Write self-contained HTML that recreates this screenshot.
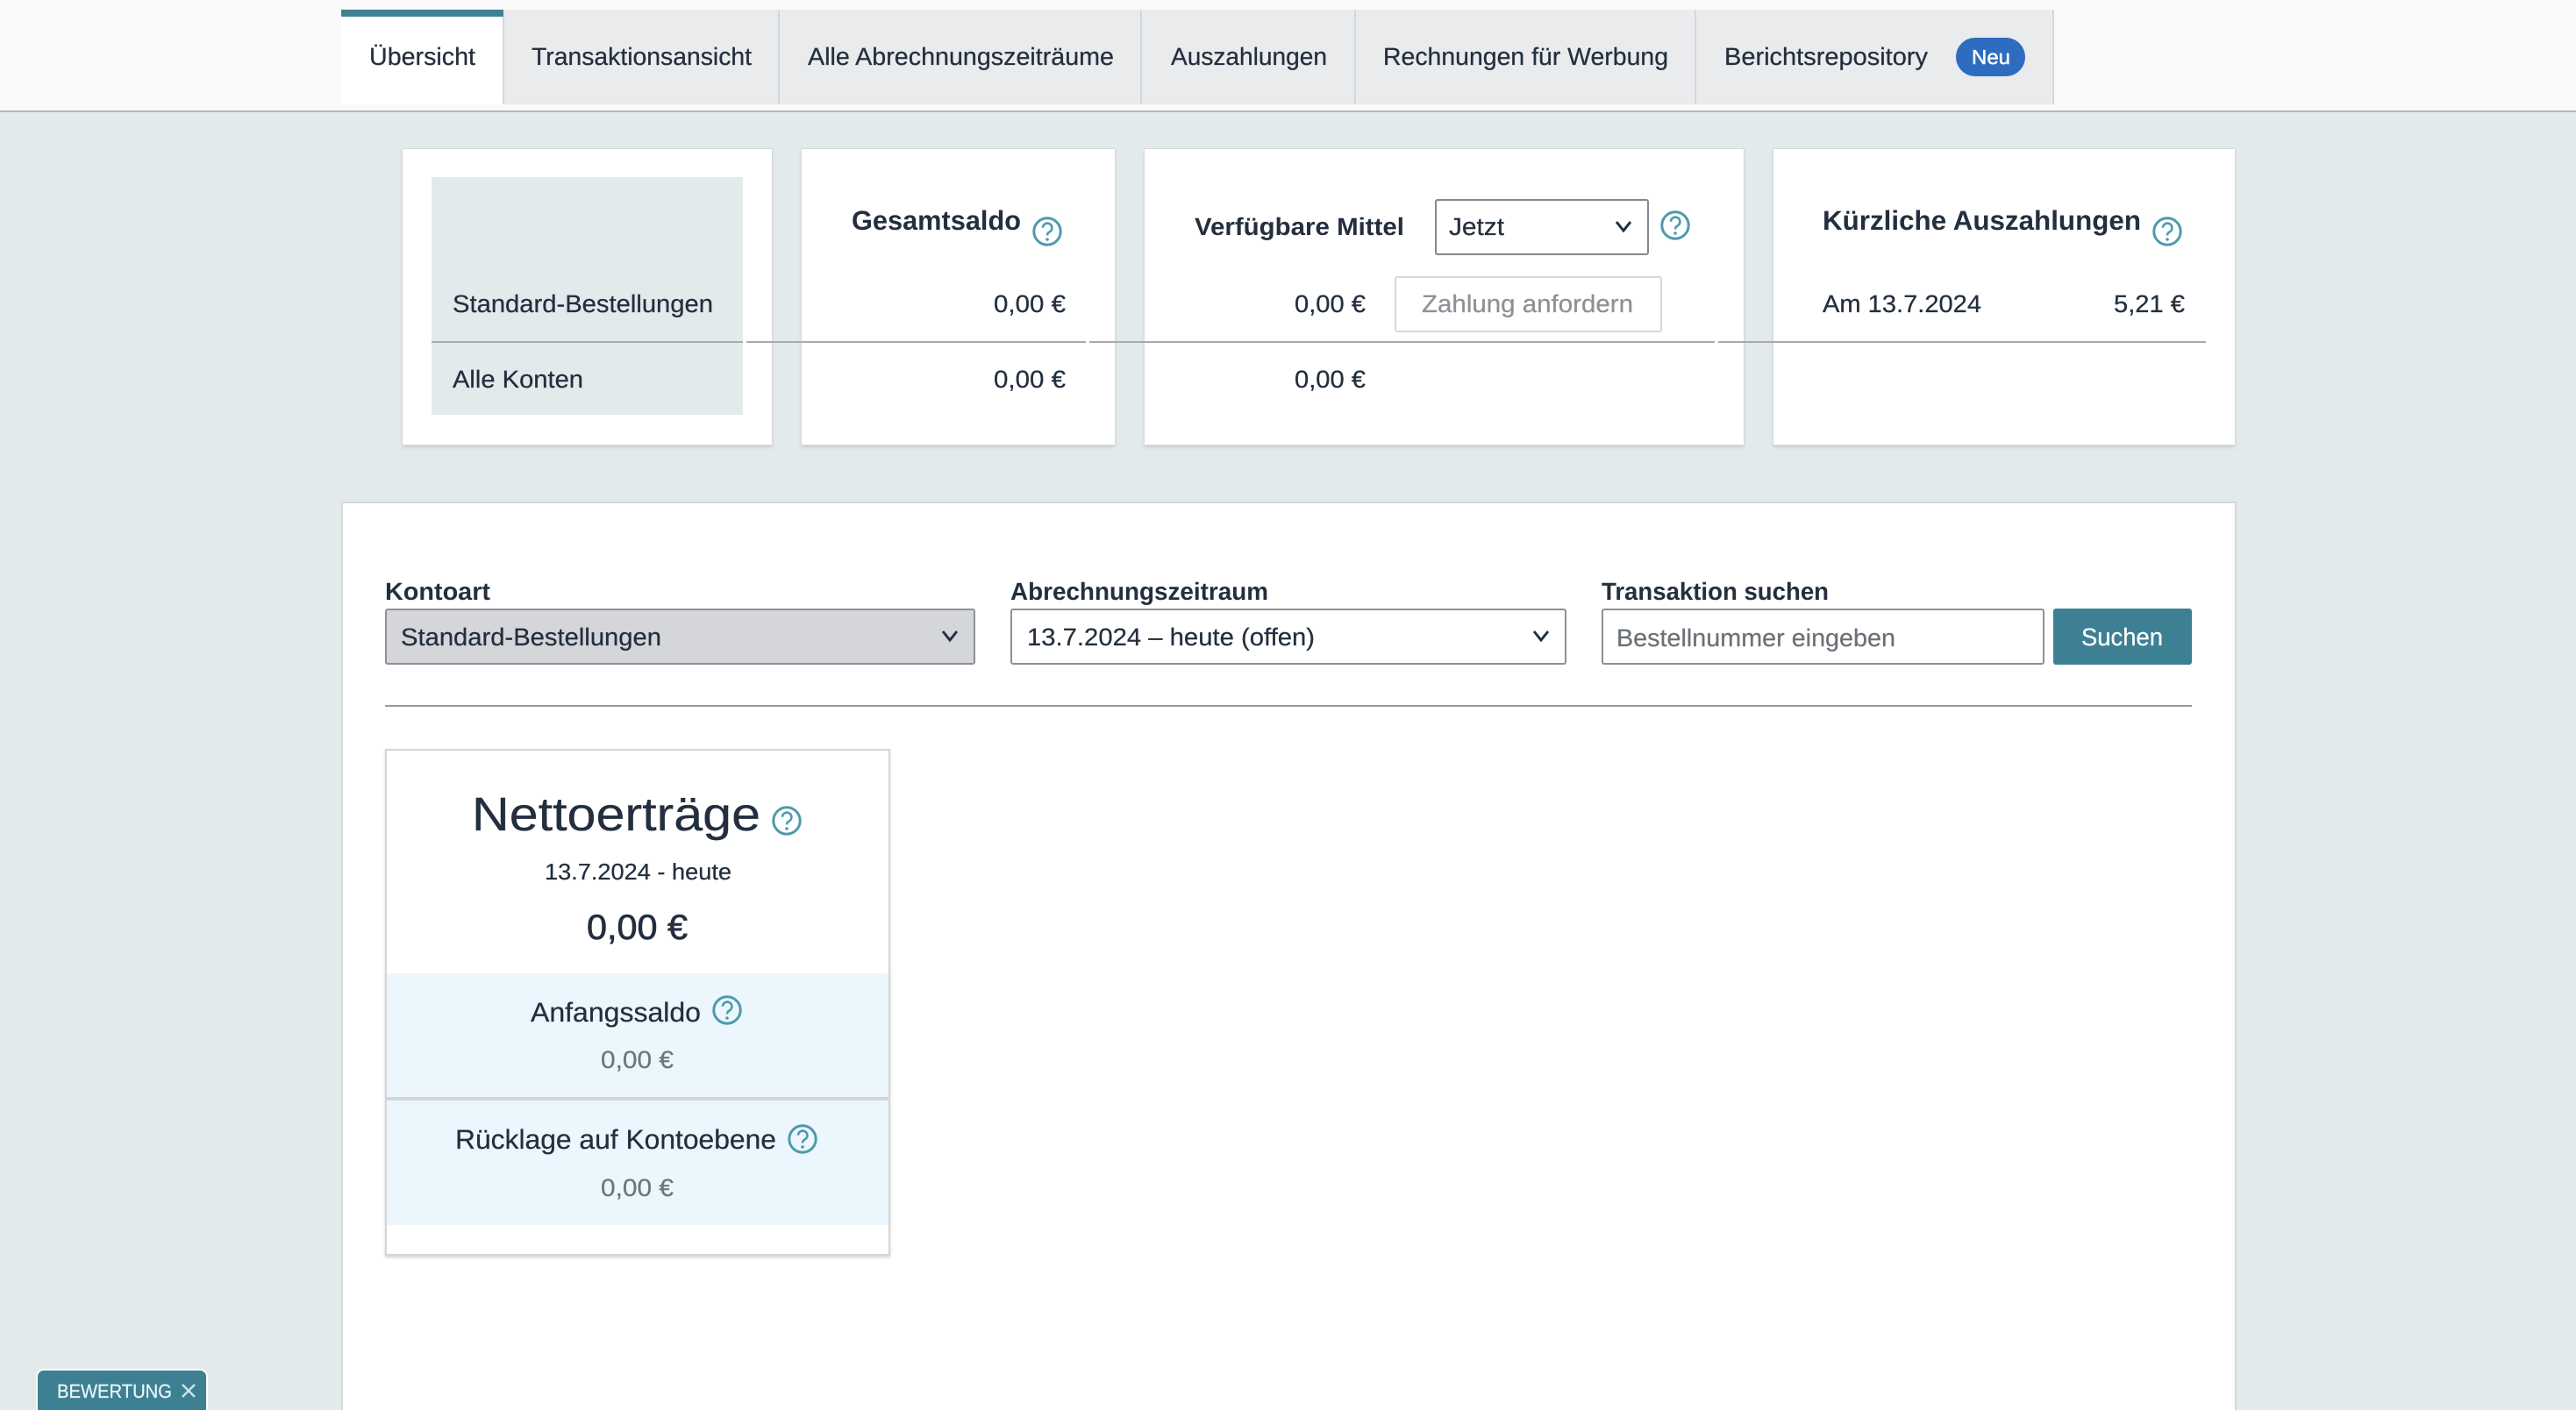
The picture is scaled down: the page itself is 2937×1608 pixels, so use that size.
<!DOCTYPE html>
<html lang="de">
<head>
<meta charset="utf-8">
<title>Übersicht</title>
<style>
html,body{margin:0;padding:0;width:2937px;height:1608px;overflow:hidden;background:#e3eaec;font-family:"Liberation Sans",sans-serif}
#root{position:relative;width:2937px;height:1608px;overflow:hidden;background:#e3eaec;contain:strict}
.b{position:absolute;box-sizing:border-box}
.card{background:#fff;box-shadow:0 0 0 1px #d5d9dc,0 3px 4px #c4c9ce}
svg{position:absolute;left:0;top:0}
text{font-family:"Liberation Sans",sans-serif;font-size:28px;fill:#232f3e;stroke:#232f3e;stroke-width:.25px;text-rendering:geometricPrecision}
.h{font-weight:bold;stroke-width:0}
</style>
</head>
<body>
<div id="root">
<!-- header -->
<div class="b" style="left:0;top:0;width:2937px;height:128px;background:#fafafa;border-bottom:2px solid #b4b7b9"></div>
<div class="b" style="left:574px;top:11px;width:1767px;height:108px;background:#e9ebed"></div>
<div class="b" style="left:389px;top:11px;width:185px;height:108px;background:#fff;border-top:8px solid #3f8194"></div>
<div class="b" style="left:573px;top:19px;width:2px;height:100px;background:#d5d8db"></div>
<div class="b" style="left:887px;top:11px;width:2px;height:108px;background:#d5d8db"></div>
<div class="b" style="left:1300px;top:11px;width:2px;height:108px;background:#d5d8db"></div>
<div class="b" style="left:1544px;top:11px;width:2px;height:108px;background:#d5d8db"></div>
<div class="b" style="left:1932px;top:11px;width:2px;height:108px;background:#d5d8db"></div>
<div class="b" style="left:2340px;top:11px;width:2px;height:108px;background:#d5d8db"></div>
<div class="b" style="left:2230px;top:43px;width:79px;height:44px;background:#2e6cc0;border-radius:22px"></div>

<!-- top cards -->
<div class="b card" style="left:459px;top:170px;width:421px;height:337px"></div>
<div class="b" style="left:492px;top:202px;width:355px;height:271px;background:#e3eaec"></div>
<div class="b card" style="left:914px;top:170px;width:357px;height:337px"></div>
<div class="b card" style="left:1305px;top:170px;width:683px;height:337px"></div>
<div class="b card" style="left:2022px;top:170px;width:526px;height:337px"></div>
<div class="b" style="left:492px;top:389px;width:355px;height:2px;background:#a9abad"></div>
<div class="b" style="left:851px;top:389px;width:387px;height:2px;background:#a9abad"></div>
<div class="b" style="left:1242px;top:389px;width:713px;height:2px;background:#a9abad"></div>
<div class="b" style="left:1959px;top:389px;width:556px;height:2px;background:#a9abad"></div>
<div class="b" style="left:1636px;top:227px;width:244px;height:64px;background:#fff;border:2px solid #85888d;border-radius:3px"></div>
<div class="b" style="left:1590px;top:315px;width:305px;height:64px;background:#fff;border:2px solid #d5d8db;border-radius:3px"></div>

<!-- main panel -->
<div class="b" style="left:391px;top:574px;width:2157px;height:1040px;background:#fff;box-shadow:0 0 0 2px #d5d9dc"></div>
<div class="b" style="left:439px;top:694px;width:673px;height:64px;background:#d5d6da;border:2px solid #8d9096;border-radius:3px"></div>
<div class="b" style="left:1152px;top:694px;width:634px;height:64px;background:#fff;border:2px solid #8d9096;border-radius:3px"></div>
<div class="b" style="left:1826px;top:694px;width:505px;height:64px;background:#fff;border:2px solid #8d9096;border-radius:3px"></div>
<div class="b" style="left:2341px;top:694px;width:158px;height:64px;background:#3d8093;border-radius:3px"></div>
<div class="b" style="left:439px;top:804px;width:2060px;height:2px;background:#959a9e"></div>

<!-- Net card -->
<div class="b" style="left:439px;top:854px;width:576px;height:578px;background:#fff;border:2px solid #d5d6da;box-shadow:0 2px 3px #d0d3d6"></div>
<div class="b" style="left:441px;top:1110px;width:572px;height:141px;background:#ebf6fd"></div>
<div class="b" style="left:441px;top:1251px;width:572px;height:4px;background:#d5d6da"></div>
<div class="b" style="left:441px;top:1255px;width:572px;height:142px;background:#ebf6fd"></div>

<!-- feedback -->
<div class="b" style="left:41px;top:1561px;width:196px;height:60px;background:#3d8093;border:2px solid #fff;border-radius:9px"></div>

<svg width="2937" height="1608" viewBox="0 0 2937 1608" xmlns="http://www.w3.org/2000/svg">
<defs>
<symbol id="q" viewBox="-17 -17 34 34" overflow="visible">
<circle r="15.2" fill="none" stroke="#4f9aaa" stroke-width="3"/>
<path d="M-5 -4.2a5.2 5.2 0 1 1 8 4.4c-2 1.3-3 2.2-3 4.3" fill="none" stroke="#4f9aaa" stroke-width="2.6"/>
<circle cx="0" cy="9" r="1.8" fill="#4f9aaa"/>
</symbol>
<path id="c" d="M-8 -5L0 5L8 -5" fill="none" stroke="#232f3e" stroke-width="3"/>
</defs>

<!-- tabs -->
<text x="421" y="74" textLength="121" lengthAdjust="spacingAndGlyphs">Übersicht</text>
<text x="606" y="74" textLength="251" lengthAdjust="spacingAndGlyphs">Transaktionsansicht</text>
<text x="921" y="74" textLength="349" lengthAdjust="spacingAndGlyphs">Alle Abrechnungszeiträume</text>
<text x="1335" y="74" textLength="178" lengthAdjust="spacingAndGlyphs">Auszahlungen</text>
<text x="1577" y="74" textLength="325" lengthAdjust="spacingAndGlyphs">Rechnungen für Werbung</text>
<text x="1966" y="74" textLength="232" lengthAdjust="spacingAndGlyphs">Berichtsrepository</text>
<text x="2248" y="73" textLength="44" lengthAdjust="spacingAndGlyphs" style="fill:#fff;stroke:#fff;stroke-width:.5px;font-size:23px">Neu</text>

<!-- card texts -->
<text x="516" y="356" textLength="297" lengthAdjust="spacingAndGlyphs">Standard-Bestellungen</text>
<text x="516" y="442" textLength="149" lengthAdjust="spacingAndGlyphs">Alle Konten</text>

<text class="h" x="971" y="262" textLength="193" lengthAdjust="spacingAndGlyphs" style="font-size:31px">Gesamtsaldo</text>
<use href="#q" x="1177" y="247" width="34" height="34"/>
<text x="1133" y="356" textLength="82" lengthAdjust="spacingAndGlyphs">0,00 €</text>
<text x="1133" y="442" textLength="82" lengthAdjust="spacingAndGlyphs">0,00 €</text>

<text class="h" x="1362" y="268" textLength="239" lengthAdjust="spacingAndGlyphs">Verfügbare Mittel</text>
<text x="1652" y="268" textLength="63" lengthAdjust="spacingAndGlyphs">Jetzt</text>
<use href="#c" x="1851" y="258"/>
<use href="#q" x="1893" y="240" width="34" height="34"/>
<text x="1476" y="356" textLength="81" lengthAdjust="spacingAndGlyphs">0,00 €</text>
<text x="1621" y="356" textLength="241" lengthAdjust="spacingAndGlyphs" style="fill:#8d9096;stroke:#8d9096">Zahlung anfordern</text>
<text x="1476" y="442" textLength="81" lengthAdjust="spacingAndGlyphs">0,00 €</text>

<text class="h" x="2078" y="262" textLength="363" lengthAdjust="spacingAndGlyphs" style="font-size:31px">Kürzliche Auszahlungen</text>
<use href="#q" x="2454" y="247" width="34" height="34"/>
<text x="2078" y="356" textLength="181" lengthAdjust="spacingAndGlyphs">Am 13.7.2024</text>
<text x="2410" y="356" textLength="81" lengthAdjust="spacingAndGlyphs">5,21 €</text>

<!-- filter row -->
<text class="h" x="439" y="684" textLength="120" lengthAdjust="spacingAndGlyphs">Kontoart</text>
<text class="h" x="1152" y="684" textLength="294" lengthAdjust="spacingAndGlyphs">Abrechnungszeitraum</text>
<text class="h" x="1826" y="684" textLength="259" lengthAdjust="spacingAndGlyphs">Transaktion suchen</text>
<text x="457" y="736" textLength="297" lengthAdjust="spacingAndGlyphs">Standard-Bestellungen</text>
<use href="#c" x="1083" y="725"/>
<text x="1171" y="736" textLength="328" lengthAdjust="spacingAndGlyphs">13.7.2024 – heute (offen)</text>
<use href="#c" x="1757" y="725"/>
<text x="1843" y="737" textLength="318" lengthAdjust="spacingAndGlyphs" style="fill:#6c7178;stroke:#6c7178">Bestellnummer eingeben</text>
<text x="2373" y="736" textLength="93" lengthAdjust="spacingAndGlyphs" style="fill:#fff;stroke:#fff">Suchen</text>

<!-- net earnings -->
<text x="538" y="947" textLength="329" lengthAdjust="spacingAndGlyphs" style="font-size:54px">Nettoerträge</text>
<use href="#q" x="880" y="919" width="34" height="34"/>
<text x="621" y="1003" textLength="213" lengthAdjust="spacingAndGlyphs" style="font-size:26px">13.7.2024 - heute</text>
<text x="669" y="1071" textLength="115" lengthAdjust="spacingAndGlyphs" style="font-size:40px;stroke-width:.7px">0,00 €</text>
<text x="605" y="1165" textLength="194" lengthAdjust="spacingAndGlyphs" style="font-size:31px">Anfangssaldo</text>
<use href="#q" x="812" y="1135" width="34" height="34"/>
<text x="685" y="1218" textLength="83" lengthAdjust="spacingAndGlyphs" style="fill:#6c7778;stroke:#6c7778">0,00 €</text>
<text x="519" y="1310" textLength="366" lengthAdjust="spacingAndGlyphs" style="font-size:31px">Rücklage auf Kontoebene</text>
<use href="#q" x="898" y="1282" width="34" height="34"/>
<text x="685" y="1364" textLength="83" lengthAdjust="spacingAndGlyphs" style="fill:#6c7778;stroke:#6c7778">0,00 €</text>

<!-- feedback -->
<text x="65" y="1594" textLength="131" lengthAdjust="spacingAndGlyphs" style="fill:#eaf5f7;stroke:#eaf5f7;font-size:22px">BEWERTUNG</text>
<path d="M208 1579L222 1593M222 1579L208 1593" stroke="#cfe3e8" stroke-width="2.4" fill="none"/>
</svg>
</div>
</body>
</html>
